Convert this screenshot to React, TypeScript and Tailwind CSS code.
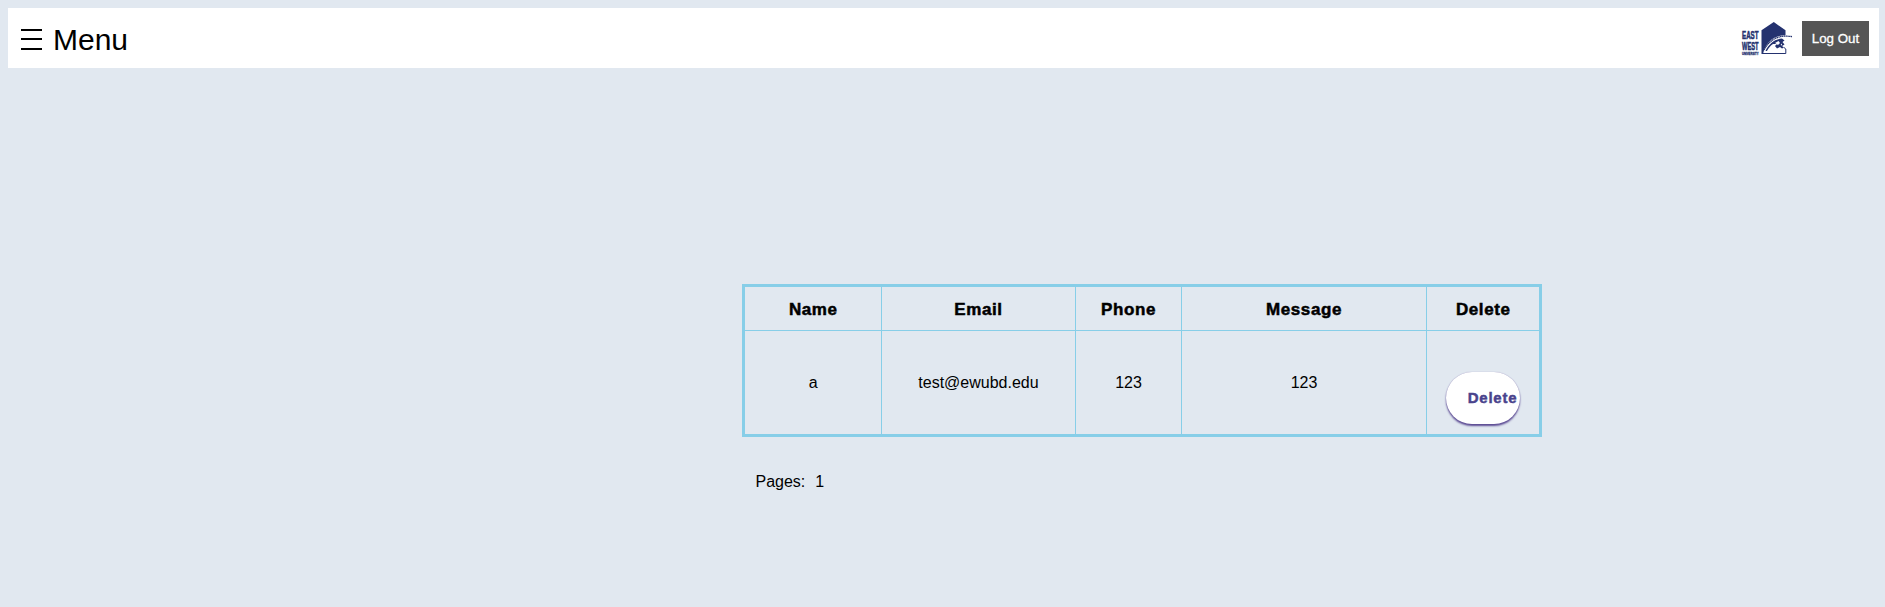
function Logo() {
  return (
    <svg className="block h-[45px] w-[62px]" viewBox="0 0 62 45" fill="#24326f">
      <g fontFamily="'Liberation Sans', sans-serif" fontWeight="700" stroke="#24326f" strokeWidth="0.6">
        <text x="7" y="23.1" fontSize="11.5" textLength="16.5" lengthAdjust="spacingAndGlyphs">EAST</text>
        <text x="7" y="34" fontSize="11.5" textLength="16.5" lengthAdjust="spacingAndGlyphs">WEST</text>
        <text x="7" y="38.5" fontSize="3.8" strokeWidth="0.3" textLength="16.5" lengthAdjust="spacingAndGlyphs">UNIVERSITY</text>
      </g>
      <path d="M26.5 14.3 L38.8 6 L50.5 14.3 V19 C39 19.5 30.5 26 28 38 H26.5 Z" />
      <path d="M29 34 C33 26 40 20.6 50 20 L57 20.6" fill="none" stroke="#24326f" strokeWidth="1.3" strokeDasharray="1.4 0.4" />
      <path d="M30.5 35 C34 28 39 23.5 47 22.5 L49.5 24.5 L47.5 26 L49.5 28.5 L47 30 L49 31.5 L47 32.5 L45 31 L42 32.5 L40 30 L42 28 L38 28 C35 30 33.5 32 32 35 Z" />
      <path d="M27 37.5 H50.8 V33 L49 31.5" fill="none" stroke="#24326f" strokeWidth="1" />
      <path d="M40 27 L43.5 25 L45 27 L43 29 Z M45.5 29 L47 27.5 L47 29.5 Z" fill="white" />
    </svg>
  );
}

const head =
  "border border-[#87cee8] pt-0.5 pl-px text-center align-middle text-[17px] font-bold tracking-[0.6px] [-webkit-text-stroke:0.5px_black]";
const cell = "border border-[#87cee8] p-0 pl-px text-center align-middle";

export default function App() {
  return (
    <div className="h-[607px] overflow-hidden bg-[#e1e8f0] p-2 font-['Liberation_Sans',Arial,sans-serif] text-base text-black">
      <header className="flex h-[60px] w-[1871px] items-center justify-between bg-white pr-2.5 pl-[11px]">
        <button className="flex items-center gap-[11px] pt-[3px] pl-[2px] text-[30px] leading-9">
          <svg className="h-[22px] w-[21px]" viewBox="0 0 21 22" fill="black" shapeRendering="crispEdges">
            <path d="M0 0h21v2H0zM0 9h21v2H0zM0 19h21v2H0z" />
          </svg>
          <span>Menu</span>
        </button>
        <div className="flex items-center gap-[5px]">
          <Logo />
          <button className="h-[35px] w-[67px] bg-[#555555] pt-px text-[13.33px] text-white [-webkit-text-stroke:0.3px_white]">
            Log Out
          </button>
        </div>
      </header>
      <main className="ml-[734px] w-[800px] pt-[216px]">
        <table className="h-[153px] w-[800px] table-fixed border-collapse border-[3px] border-[#87cee8]">
          <colgroup>
            <col className="w-[137.5px]" />
            <col className="w-[194px]" />
            <col className="w-[106px]" />
            <col className="w-[245px]" />
            <col />
          </colgroup>
          <thead>
            <tr className="h-[45px]">
              <th className={head}>Name</th>
              <th className={head}>Email</th>
              <th className={head}>Phone</th>
              <th className={head}>Message</th>
              <th className={head}>Delete</th>
            </tr>
          </thead>
          <tbody>
            <tr className="h-[105px]">
              <td className={cell}>a</td>
              <td className={cell}>test@ewubd.edu</td>
              <td className={cell}>123</td>
              <td className={cell}>123</td>
              <td className={cell}>
                <button className="mx-auto mt-[31px] flex h-[52px] w-[74px] items-center rounded-[26px] bg-white pt-px pl-[21.5px] text-[15px] font-bold tracking-[0.75px] text-[#49438c] shadow-[0_2px_2px_#5b4a93,0_0_1px_#8e86b5] [-webkit-text-stroke:0.45px_#49438c]">
                  Delete
                </button>
              </td>
            </tr>
          </tbody>
        </table>
        <div className="mt-[35px] flex gap-[10px] pl-[13.5px] leading-5">
          <span>Pages:</span>
          <span>1</span>
        </div>
      </main>
    </div>
  );
}
